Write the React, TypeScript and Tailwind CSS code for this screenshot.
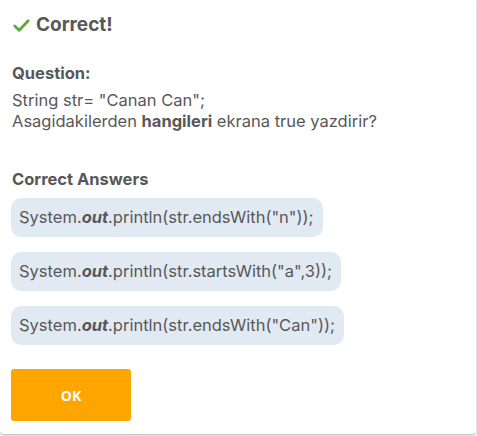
export default function App() {
  const answers = [
    'str.endsWith("n"));',
    'str.startsWith("a",3));',
    'str.endsWith("Can"));',
  ];
  return (
    <div className="w-[477px] h-[436px] bg-white">
      <div className="w-[476px] h-[434px] rounded-b-[4px] bg-white shadow-[0_1px_3px_rgba(0,0,0,0.35)] px-[11px] pt-[12px] text-[#585858] font-['Inter',sans-serif]">
        <div className="flex items-center gap-[5px] pl-[1px]">
          <svg className="w-[19px] h-[19px]" viewBox="0 0 24 24" fill="none" stroke="#5fa83b" strokeWidth="3.6" strokeLinecap="round" strokeLinejoin="round">
            <path d="M3.5 12.5l5.5 5.5L20.5 6" />
          </svg>
          <span className="text-[19px] font-bold leading-[26px]">Correct!</span>
        </div>
        <div className="mt-[25px] text-[16.5px] font-bold leading-[20px] pl-[1px]">Question:</div>
        <div className="mt-[7px] text-[16.5px] leading-[21px] pl-[1px]">
          <div>String str= "Canan Can";</div>
          <div>
            Asagidakilerden <b className="font-bold">hangileri</b> ekrana true yazdirir?
          </div>
        </div>
        <div className="mt-[37px] text-[16.5px] font-bold leading-[20px] pl-[1px]">Correct Answers</div>
        <div className="mt-[9px] flex flex-col items-start gap-[15px]">
          {answers.map((a) => (
            <div key={a} className="rounded-[10px] bg-[#e1eaf3] pl-[8px] pr-[9px] h-[39px] flex items-center text-[16.5px]">
              System.<b className="font-bold italic">out</b>.println({a}
            </div>
          ))}
        </div>
        <button className="mt-[24px] w-[120px] h-[52px] rounded-[3px] bg-[#ffa500] text-white text-[14px] font-bold font-['Open_Sans',sans-serif]">
          OK
        </button>
      </div>
    </div>
  );
}
